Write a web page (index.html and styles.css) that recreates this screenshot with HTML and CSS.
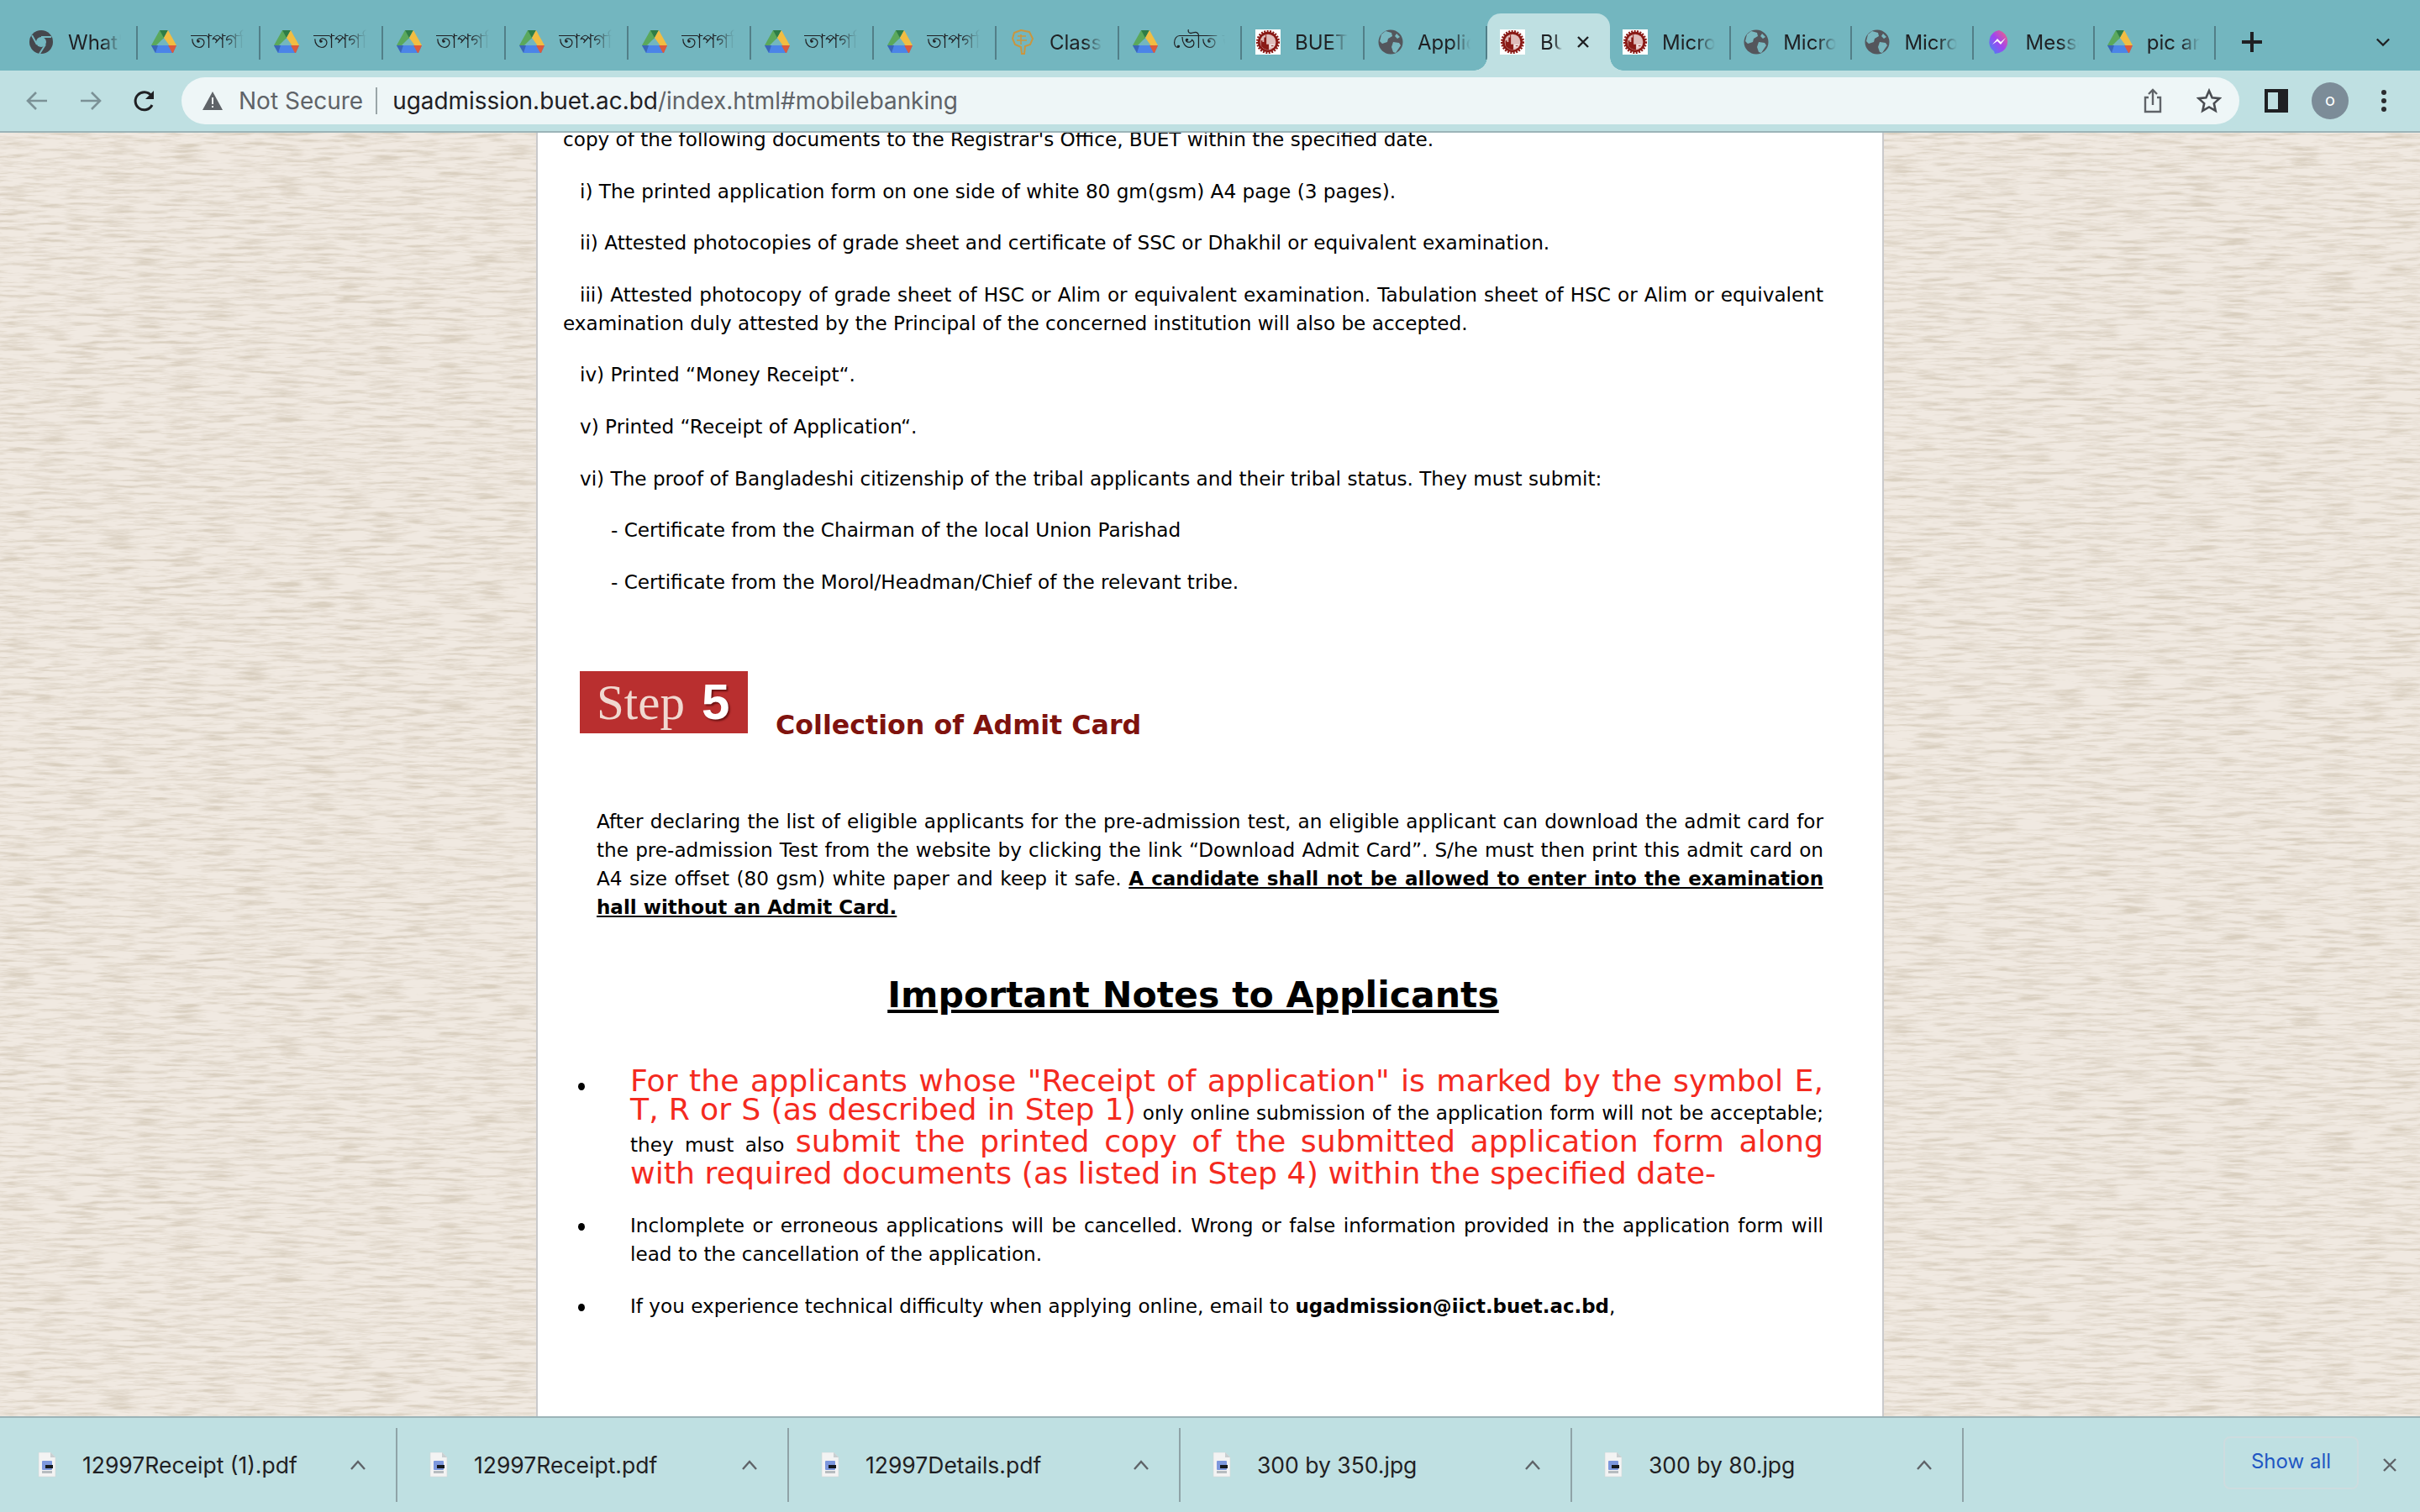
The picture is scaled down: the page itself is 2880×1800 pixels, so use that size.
FILE: index.html
```html
<!DOCTYPE html>
<html>
    <head>
        <title>BUET Admission</title>
        <link rel="stylesheet" href="styles.css">
    </head>
    <body>
        <svg class="defs" width="0" height="0">
            <defs>
                <symbol id="drive" viewBox="0 0 30 28">
                    <path d="M10 0h10l-5 9-4 3z" fill="#2e7d46"/>
                    <path d="M10 0L0 18l5 1 10-10z" fill="#5aa85c"/>
                    <path d="M20 0l10 18-7 2L15 9z" fill="#f2bd42"/>
                    <path d="M0 18h30l-4 9H5z" fill="#4b84e8"/>
                    <path d="M20 18h10l-4 9h-1z" fill="#dc5a3c"/>
                    <path d="M0 18h8l-3 9z" fill="#3a66b8"/>
                </symbol>
                <symbol id="globe" viewBox="0 0 30 30">
                    <circle cx="15" cy="15" r="14.500" fill="#54565c"/>
                    <path d="M9 2l7 2 1 4-5 3-1 4-6 2-3-3 2-8zM18 15l7 1 2 3-6 9-3-1-2-6zM22 5l4 4-3 2-3-3z" fill="#7ab8c0"/>
                </symbol>
                <symbol id="seal" viewBox="0 0 32 32">
                    <rect width="32" height="32" fill="#fff"/>
                    <circle cx="16" cy="16" r="13" fill="#8a1a16" stroke="#8a1a16" stroke-width="4" stroke-dasharray="2 1.500"/>
                    <circle cx="16" cy="16" r="10" fill="#dfbcba"/>
                    <path d="M7 19V14h2v2h2v-6h2V7h1v12h3v7l-5-1-4-3z" fill="#8a1a16"/>
                    <path d="M18 19h7l-2 4h-5z" fill="#f3e6e5"/>
                    <path d="M20 20.500h3v1h-3z" fill="#8a1a16"/>
                </symbol>
                <symbol id="doc" viewBox="0 0 22 30">
                    <path d="M1 0h14l6 6v23H1z" fill="#f3f3f3" stroke="#d0d6d8" stroke-width=".6"/>
                    <path d="M15 0v6h6z" fill="#c9cfd1"/>
                    <rect x="5" y="10" width="12" height="11" rx="1" fill="#7d97dd"/>
                    <rect x="9" y="15" width="9" height="4" fill="#15181c"/>
                    <rect x="5" y="22" width="12" height="3" fill="#b7bcc0"/>
                </symbol>
                <symbol id="caret" viewBox="0 0 20 14">
                    <path d="M2 12l8-9 8 9" fill="none" stroke="#5f6368" stroke-width="2.400"/>
                </symbol>
            </defs>
        </svg>

        <div class="tabstrip">
            <div class="tab">
                <svg class="fav" viewBox="0 0 30 30"><circle cx="15" cy="15" r="14" fill="#45474c"/><circle cx="15" cy="15" r="6" fill="#74b6bf"/><path d="M15 9h12M10 18L4 7M20 18l-7 11" stroke="#74b6bf" stroke-width="2"/></svg>
                <span class="tab-title">What's</span>
            </div>
            <div class="tab"><svg class="fav"><use href="#drive"/></svg><span class="tab-title">তাপগতি</span></div>
            <div class="tab"><svg class="fav"><use href="#drive"/></svg><span class="tab-title">তাপগতি</span></div>
            <div class="tab"><svg class="fav"><use href="#drive"/></svg><span class="tab-title">তাপগতি</span></div>
            <div class="tab"><svg class="fav"><use href="#drive"/></svg><span class="tab-title">তাপগতি</span></div>
            <div class="tab"><svg class="fav"><use href="#drive"/></svg><span class="tab-title">তাপগতি</span></div>
            <div class="tab"><svg class="fav"><use href="#drive"/></svg><span class="tab-title">তাপগতি</span></div>
            <div class="tab"><svg class="fav"><use href="#drive"/></svg><span class="tab-title">তাপগতি</span></div>
            <div class="tab">
                <svg class="fav" viewBox="0 0 30 30"><path d="M5 4l8-3 10 2 4 8-3 7-6 2-1 9h-3l-1-8-7-3-3-7z" fill="none" stroke="#c9963f" stroke-width="2"/><path d="M9 8h10M8 13h12M13 6v12" stroke="#c9963f" stroke-width="1.600"/></svg>
                <span class="tab-title">Classes</span>
            </div>
            <div class="tab"><svg class="fav"><use href="#drive"/></svg><span class="tab-title">ভৌত তত্ত্ব</span></div>
            <div class="tab"><svg class="fav"><use href="#seal"/></svg><span class="tab-title">BUET</span></div>
            <div class="tab"><svg class="fav"><use href="#globe"/></svg><span class="tab-title">Application</span></div>
            <div class="tab active">
                <svg class="fav"><use href="#seal"/></svg><span class="tab-title short">BUET</span>
                <svg class="tab-close" viewBox="0 0 16 16"><path d="M2 2l12 12M14 2L2 14" stroke="#1f2023" stroke-width="2.400"/></svg>
            </div>
            <div class="tab narrow"><svg class="fav"><use href="#seal"/></svg><span class="tab-title">Microsoft</span></div>
            <div class="tab narrow"><svg class="fav"><use href="#globe"/></svg><span class="tab-title">Microsoft</span></div>
            <div class="tab narrow"><svg class="fav"><use href="#globe"/></svg><span class="tab-title">Microsoft</span></div>
            <div class="tab narrow">
                <svg class="fav" viewBox="0 0 30 30"><defs><linearGradient id="ms" x1="0" y1="1" x2="1" y2="0"><stop offset="0" stop-color="#3d8bf5"/><stop offset=".5" stop-color="#a044f0"/><stop offset="1" stop-color="#f7657a"/></linearGradient></defs><path d="M15 1a14 14 0 0 1 0 27l-5 1-1-3A14 14 0 0 1 15 1z" fill="url(#ms)"/><path d="M7 18l6-7 4 4 6-5-6 8-4-4z" fill="#fff"/></svg>
                <span class="tab-title">Messenger</span>
            </div>
            <div class="tab narrow"><svg class="fav"><use href="#drive"/></svg><span class="tab-title">pic and</span></div>
            <svg class="new-tab" viewBox="0 0 24 24"><path d="M12 0v24M0 12h24" stroke="#1f2023" stroke-width="4"/></svg>
            <svg class="tab-list" viewBox="0 0 20 12"><path d="M2 2l8 8 8-8" fill="none" stroke="#1f2023" stroke-width="2.400"/></svg>
        </div>

        <div class="toolbar">
            <svg class="nav-icon" viewBox="0 0 28 28"><path d="M26 14H3M13 4L3 14l10 10" fill="none" stroke="#7b9196" stroke-width="2.600"/></svg>
            <svg class="nav-icon" viewBox="0 0 28 28"><path d="M2 14h23M15 4l10 10-10 10" fill="none" stroke="#7b9196" stroke-width="2.600"/></svg>
            <svg class="nav-icon" viewBox="0 0 28 28"><path d="M23 19a10.500 10.500 0 1 1-1-11" fill="none" stroke="#1f2023" stroke-width="3"/><path d="M25 2v10H15z" fill="#1f2023"/></svg>
            <div class="omnibox">
                <svg class="warn" viewBox="0 0 26 24"><path d="M13 1l12 22H1z" fill="#5f6368"/><path d="M12 8h2v8h-2zM12 18h2v2h-2z" fill="#eef6f7"/></svg>
                <span class="not-secure">Not Secure</span>
                <span class="omni-sep"></span>
                <span class="url">ugadmission.buet.ac.bd<span class="url-path">/index.html#mobilebanking</span></span>
                <svg class="omni-icon" viewBox="0 0 24 30"><path d="M7 11H3v17h18V11h-4M12 20V2M7 7l5-5 5 5" fill="none" stroke="#5f6368" stroke-width="2.400"/></svg>
                <svg class="omni-icon star" viewBox="0 0 30 30"><path d="M15 3l3.600 8.200 8.900.9-6.700 6 1.900 8.800L15 22.400l-7.700 4.500 1.900-8.800-6.700-6 8.900-.9z" fill="none" stroke="#4a4d52" stroke-width="2.600"/></svg>
            </div>
            <div class="panel-btn"></div>
            <div class="avatar">o</div>
            <svg class="menu-dots" viewBox="0 0 6 28"><circle cx="3" cy="4" r="3" fill="#2a2b2e"/><circle cx="3" cy="14" r="3" fill="#2a2b2e"/><circle cx="3" cy="24" r="3" fill="#2a2b2e"/></svg>
        </div>

        <div class="viewport">
            <svg class="paper" width="2880" height="1528">
                <filter id="grain" x="0" y="0" width="100%" height="100%" color-interpolation-filters="sRGB">
                    <feTurbulence type="fractalNoise" baseFrequency="0.025 0.25" numOctaves="4" seed="7"/>
                    <feColorMatrix values="0 0 0 0 .85  0 0 0 0 .81  0 0 0 0 .75  1.800 1.800 0 0 -1.600"/>
                </filter>
                <rect width="2880" height="1528" fill="#f0e9e1"/>
                <rect width="2880" height="1528" filter="url(#grain)"/>
            </svg>
            <div class="page">
                <p class="gap">copy of the following documents to the Registrar's Office, BUET within the specified date.</p>
                <p class="gap item">i) The printed application form on one side of white 80 gm(gsm) A4 page (3 pages).</p>
                <p class="gap item">ii) Attested photocopies of grade sheet and certificate of SSC or Dhakhil or equivalent examination.</p>
                <p class="gap item">iii) Attested photocopy of grade sheet of HSC or Alim or equivalent examination. Tabulation sheet of HSC or Alim or equivalent examination duly attested by the Principal of the concerned institution will also be accepted.</p>
                <p class="gap item">iv) Printed “Money Receipt“.</p>
                <p class="gap item">v) Printed “Receipt of Application“.</p>
                <p class="gap item">vi) The proof of Bangladeshi citizenship of the tribal applicants and their tribal status. They must submit:</p>
                <p class="gap sub">- Certificate from the Chairman of the local Union Parishad</p>
                <p class="gap sub">- Certificate from the Morol/Headman/Chief of the relevant tribe.</p>

                <div class="step-row">
                    <div class="step-badge"><span class="step-word">Step</span><span class="step-num">5</span></div>
                    <span class="step-title">Collection of Admit Card</span>
                </div>

                <p class="step-text">After declaring the list of eligible applicants for the pre-admission test, an eligible applicant can download the admit card for the pre-admission Test from the website by clicking the link “Download Admit Card”. S/he must then print this admit card on A4 size offset (80 gsm) white paper and keep it safe. <b class="strong-u">A candidate shall not be allowed to enter into the examination hall without an Admit Card.</b></p>

                <h2 class="notes-title">Important Notes to Applicants</h2>

                <ul class="notes">
                    <li class="mixed"><span class="red">For the applicants whose "Receipt of application" is marked by the symbol E, T, R or S (as described in Step 1)</span> <span class="small">only online submission of the application form will not be acceptable; they must also</span> <span class="red">submit the printed copy of the submitted application form along with required documents (as listed in Step 4) within the specified date-</span></li>
                    <li>Inclomplete or erroneous applications will be cancelled. Wrong or false information provided in the application form will lead to the cancellation of the application.</li>
                    <li>If you experience technical difficulty when applying online, email to <b class="mail">ugadmission@iict.buet.ac.bd</b>,</li>
                </ul>
            </div>
        </div>

        <div class="downloads">
            <div class="dl"><svg class="dl-icon"><use href="#doc"/></svg><span class="dl-name">12997Receipt (1).pdf</span><svg class="dl-caret"><use href="#caret"/></svg></div>
            <div class="dl"><svg class="dl-icon"><use href="#doc"/></svg><span class="dl-name">12997Receipt.pdf</span><svg class="dl-caret"><use href="#caret"/></svg></div>
            <div class="dl"><svg class="dl-icon"><use href="#doc"/></svg><span class="dl-name">12997Details.pdf</span><svg class="dl-caret"><use href="#caret"/></svg></div>
            <div class="dl"><svg class="dl-icon"><use href="#doc"/></svg><span class="dl-name">300 by 350.jpg</span><svg class="dl-caret"><use href="#caret"/></svg></div>
            <div class="dl"><svg class="dl-icon"><use href="#doc"/></svg><span class="dl-name">300 by 80.jpg</span><svg class="dl-caret"><use href="#caret"/></svg></div>
            <div class="show-all">Show all</div>
            <svg class="dl-close" viewBox="0 0 18 18"><path d="M2 2l14 14M16 2L2 16" stroke="#5f6368" stroke-width="2.400"/></svg>
        </div>
    </body>
</html>
```

FILE: styles.css
```css
html, body{
    margin:0;
    height:100%;
}
body{
    display:flex;
    flex-direction:column;
    width:2880px;
    height:1800px;
    overflow:hidden;
    font-family:Inter, "Noto Sans", sans-serif;
    color:#1f2023;
}
.defs{
    position:absolute;
}

/* tabs */
.tabstrip{
    display:flex;
    align-items:flex-end;
    height:84px;
    flex:none;
    padding-left:18px;
    box-sizing:border-box;
    background-color:#73b6bf;
}
.tab{
    display:flex;
    align-items:center;
    width:146px;
    height:68px;
    padding-left:16px;
    box-sizing:border-box;
    flex:none;
    position:relative;
}
.tab.narrow{
    width:144.2px;
    padding-left:15px;
}
.tab::before{
    content:"";
    position:absolute;
    right:0;
    top:15px;
    height:40px;
    width:2px;
    background-color:#527f88;
}
.tab.active{
    padding-left:15px;
    background-color:#bfe0e2;
    border-radius:16px 16px 0 0;
}
.tab.active::before, .tab.active::after{
    content:"";
    position:absolute;
    top:auto;
    bottom:0;
    width:16px;
    height:16px;
}
.tab.active::before{
    right:auto;
    left:-16px;
    background:radial-gradient(circle at 0 0, transparent 15.5px, #bfe0e2 16px);
}
.tab.active::after{
    right:-16px;
    background:radial-gradient(circle at 100% 0, transparent 15.5px, #bfe0e2 16px);
}
.fav{
    width:30px;
    height:30px;
    flex:none;
}
.tab-title{
    margin-left:17px;
    width:63px;
    overflow:hidden;
    white-space:nowrap;
    font-size:24px;
    -webkit-mask-image:linear-gradient(to right, black 65%, transparent 100%);
    mask-image:linear-gradient(to right, black 65%, transparent 100%);
}
.tab-title.short{
    margin-left:18px;
    width:26px;
    flex:none;
}
.tab-close{
    width:16px;
    height:16px;
    margin-left:17px;
}
.new-tab{
    width:24px;
    height:24px;
    margin-left:31px;
    margin-bottom:22px;
    flex:none;
}
.tab-list{
    width:18px;
    height:12px;
    margin-left:auto;
    margin-right:35px;
    margin-bottom:28px;
}

/* toolbar */
.toolbar{
    display:flex;
    align-items:center;
    height:74px;
    flex:none;
    padding-left:30px;
    box-sizing:border-box;
    background-color:#bfe0e2;
    border-bottom:2px solid #9cb4b8;
}
.nav-icon{
    width:28px;
    height:28px;
    margin-right:36px;
    flex:none;
}
.omnibox{
    display:flex;
    align-items:center;
    width:2449px;
    height:56px;
    margin-left:-6px;
    padding-left:24px;
    box-sizing:border-box;
    border-radius:28px;
    background-color:#eef6f7;
    flex:none;
}
.warn{
    width:26px;
    height:24px;
    margin-right:18px;
    flex:none;
}
.not-secure{
    font-size:28px;
    color:#5f6368;
}
.omni-sep{
    width:2px;
    height:32px;
    margin:0 18px 0 15px;
    background-color:#9aa5a8;
}
.url{
    font-size:27.9px;
    color:#1f2023;
}
.url-path{
    color:#5f6368;
}
.omni-icon{
    width:24px;
    height:30px;
    margin-left:auto;
    margin-right:40px;
    flex:none;
}
.omni-icon.star{
    width:30px;
    height:30px;
    margin-left:0;
    margin-right:21px;
}
.panel-btn{
    width:28px;
    height:28px;
    margin-left:30px;
    border-style:solid;
    border-color:#1f2023;
    border-width:4px 12px 4px 4px;
    box-sizing:border-box;
    flex:none;
}
.avatar{
    width:44px;
    height:44px;
    margin-left:28px;
    border-radius:50%;
    background-color:#7c8c98;
    color:#fff;
    font-size:20px;
    line-height:42px;
    text-align:center;
    flex:none;
}
.menu-dots{
    width:6px;
    height:28px;
    margin-left:39px;
    flex:none;
}

/* page */
.viewport{
    flex:1;
    position:relative;
    overflow:hidden;
    background-color:#f0e9e1;
}
.paper{
    position:absolute;
    left:0;
    top:0;
}
.page{
    position:relative;
    width:1604px;
    height:1600px;
    margin:-9px auto 0;
    padding:0 70px 0 30px;
    box-sizing:border-box;
    border-left:2px solid #c9c9cb;
    border-right:2px solid #c9c9cb;
    background-color:#fff;
    font-family:"DejaVu Sans", Verdana, sans-serif;
    font-size:23.15px;
    line-height:34px;
    color:#000;
}
.page p{
    margin:0;
}
.page .gap{
    margin-bottom:27.6px;
}
.item{
    text-indent:20px;
    text-align:justify;
}
.sub{
    text-indent:57px;
}
.step-row{
    display:flex;
    align-items:flex-end;
    margin:89px 0 0 20px;
}
.step-badge{
    display:flex;
    align-items:center;
    width:200px;
    height:74px;
    padding-left:20px;
    box-sizing:border-box;
    background-color:#b92f2f;
    flex:none;
}
.step-word{
    font-family:"Liberation Serif", serif;
    font-size:59px;
    line-height:74px;
    color:#f0d8d0;
}
.step-num{
    margin-left:20px;
    font-family:"Liberation Sans", sans-serif;
    font-weight:bold;
    font-size:60px;
    line-height:74px;
    color:#fff;
    text-shadow:2px 2px 2px #6d1212;
}
.step-title{
    margin:0 0 -12px 33px;
    font-size:31.7px;
    line-height:44px;
    font-weight:bold;
    color:#7f130e;
}
.page .step-text{
    margin:88px 0 0 40px;
    text-align:justify;
}
.strong-u{
    font-size:23px;
    text-decoration:underline;
}
.notes-title{
    margin:57px 0 0;
    font-size:42.6px;
    line-height:60px;
    text-decoration:underline;
    text-align:center;
}
.notes{
    margin:56px 0 0;
    padding:0 0 0 80px;
    list-style:none;
    text-align:justify;
}
.notes li{
    position:relative;
    margin-bottom:28px;
}
.notes li::before{
    content:"";
    position:absolute;
    left:-62px;
    top:14px;
    width:8px;
    height:9px;
    border-radius:50%;
    background-color:#000;
}
.notes li.mixed{
    line-height:0;
}
.notes li.mixed::before{
    top:19px;
}
.mail{
    font-size:22.9px;
}
.red{
    color:#f42a1f;
    font-size:36.3px;
    line-height:34px;
}
.small{
    line-height:34px;
}

/* downloads */
.downloads{
    display:flex;
    align-items:center;
    height:114px;
    flex:none;
    padding-left:7px;
    box-sizing:border-box;
    background-color:#bfe0e2;
    border-top:2px solid #9cb4b8;
}
.dl{
    display:flex;
    align-items:center;
    width:466px;
    height:88px;
    padding-left:38px;
    box-sizing:border-box;
    border-right:2px solid #8fa3a7;
    flex:none;
}
.dl-icon{
    width:22px;
    height:30px;
    flex:none;
}
.dl-name{
    width:318px;
    margin-left:31px;
    font-size:26.5px;
    white-space:nowrap;
    flex:none;
}
.dl-caret{
    width:20px;
    height:14px;
    flex:none;
}
.show-all{
    width:161px;
    height:63px;
    margin-left:auto;
    margin-right:28px;
    margin-bottom:5px;
    box-sizing:border-box;
    border:2px solid #cddcdf;
    border-radius:8px;
    font-size:24px;
    line-height:56px;
    text-align:center;
    color:#1f57c3;
}
.dl-close{
    width:18px;
    height:18px;
    margin-right:27px;
    flex:none;
}
```
